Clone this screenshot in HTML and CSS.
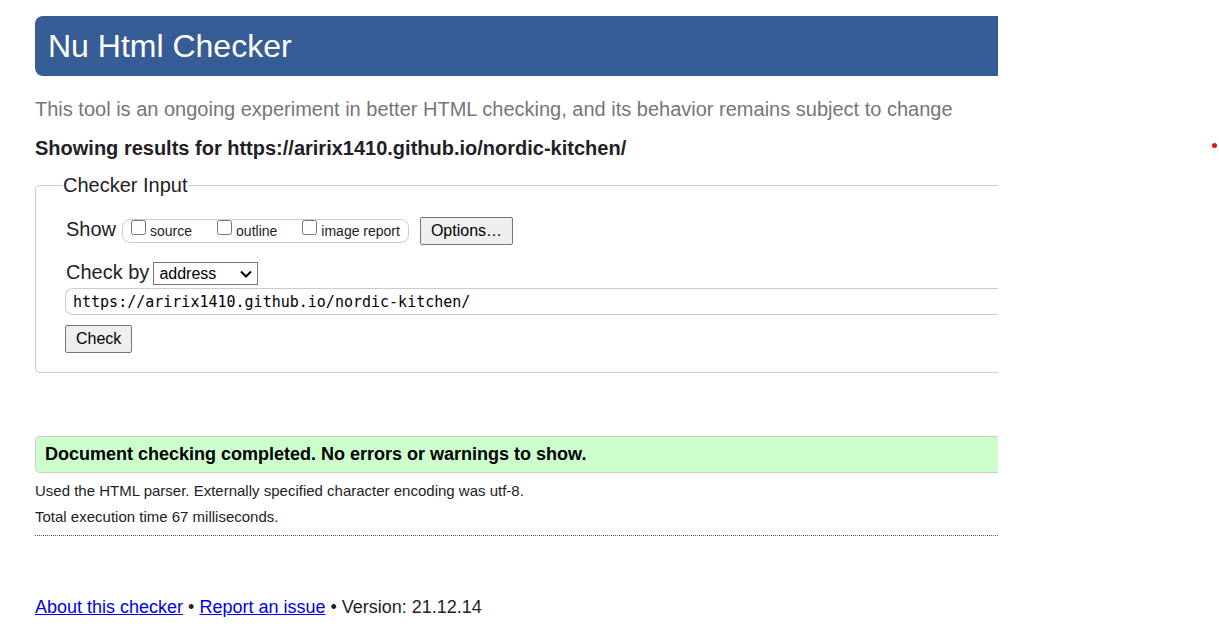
FILE: index.html
```
<!DOCTYPE html>
<html lang="en">
<head>
<meta charset="utf-8">
<title>Nu Html Checker</title>
<link rel="stylesheet" href="styles.css">
</head>
<body>
<div class="page">
  <header>
    <h1 class="banner">Nu Html Checker</h1>
    <p class="tagline">This tool is an ongoing experiment in better HTML checking, and its behavior remains subject to change</p>
  </header>
  <main>
    <h2 class="heading">Showing results for https://aririx1410.github.io/nordic-kitchen/</h2>
    <form>
      <fieldset class="checker">
        <legend class="legend">Checker Input</legend>
        <div class="row show-row">
          <span>Show</span>
          <span class="options">
            <label class="option"><input class="tick" type="checkbox">source</label>
            <label class="option"><input class="tick" type="checkbox">outline</label>
            <label class="option"><input class="tick" type="checkbox">image report</label>
          </span>
          <button class="button" type="button">Options…</button>
        </div>
        <div class="row by-row">
          <label for="by">Check by</label>
          <span class="select-wrap">
            <select class="select" id="by"><option>address</option><option>file upload</option><option>text input</option></select>
            <svg class="chevron" width="12" height="8" viewBox="0 0 12 8" aria-hidden="true"><path d="M1 1.5 6 6.5 11 1.5" fill="none" stroke="#000" stroke-width="2"/></svg>
          </span>
        </div>
        <input class="address" type="text" aria-label="Address" value="https://aririx1410.github.io/nordic-kitchen/">
        <button class="button" type="button">Check</button>
      </fieldset>
    </form>
    <p class="success">Document checking completed. No errors or warnings to show.</p>
    <div class="details">
      <p>Used the HTML parser. Externally specified character encoding was utf-8.</p>
      <p>Total execution time 67 milliseconds.</p>
    </div>
  </main>
  <footer class="footer"><a href="#about">About this checker</a> • <a href="#issue">Report an issue</a> • Version: 21.12.14</footer>
</div>
<span class="dot"></span>
</body>
</html>
```
FILE: styles.css
```
* {
  box-sizing: border-box;
}

body {
  margin: 0;
  background: #fff;
  color: #1f2126;
  font-family: "Liberation Sans", Arial, sans-serif;
  font-size: 20px;
  line-height: 24px;
}

h1, h2, p {
  margin: 0;
}

.page {
  padding: 16px 221px 12px 35px;
}

.banner {
  padding: 12px 13px;
  border-radius: 8px 0 0 8px;
  background: #365d95;
  color: #fff;
  font-size: 32px;
  font-weight: 400;
  line-height: 36px;
}

.tagline {
  margin-top: 21px;
  color: #767676;
}

.heading {
  margin-top: 15px;
  font-size: 20px;
}

.checker {
  min-width: 0;
  margin: 13px 0 0;
  padding: 20px 0 19px 29px;
  border: 1px solid #ccc;
  border-right: 0;
  border-radius: 5px 0 0 5px;
}

.legend {
  margin-left: -2px;
  padding: 0;
}

.row {
  display: flex;
  align-items: center;
  padding-left: 1px;
  line-height: 20px;
}

.row > :first-child {
  padding-bottom: 4px;
}

.show-row {
  gap: 6px;
}

.options {
  display: flex;
  gap: 25px;
  height: 24px;
  margin-right: 5px;
  padding: 0 8px;
  border: 1px solid #ccc;
  border-radius: 8px;
  font-size: 14px;
  line-height: 22px;
}

.option {
  display: flex;
  gap: 4px;
}

.tick {
  width: 15px;
  height: 15px;
  margin: 0;
}

.button {
  display: block;
  height: 28px;
  padding: 0 10px;
  border: 1px solid #767676;
  border-radius: 2px;
  background: #efefef;
  color: #000;
  font-family: inherit;
  font-size: 16px;
}

.by-row {
  gap: 4px;
  margin-top: 17px;
}

.select-wrap {
  display: grid;
  align-items: center;
}

.select {
  grid-area: 1 / 1;
  width: 105px;
  height: 23px;
  margin-bottom: 1px;
  padding: 0 5px;
  appearance: none;
  border: 1px solid #767676;
  border-radius: 0;
  background: #fff;
  color: #000;
  font-family: inherit;
  font-size: 16px;
}

.chevron {
  grid-area: 1 / 1;
  justify-self: end;
  margin-right: 6px;
  pointer-events: none;
}

.address {
  display: block;
  width: 100%;
  height: 27px;
  margin: 2px 0 10px;
  padding: 1px 7px 0;
  border: 1px solid #ccc;
  border-right: 0;
  border-radius: 8px 0 0 8px;
  color: #000;
  font-family: "DejaVu Sans Mono", monospace;
  font-size: 15px;
}

.success {
  margin-top: 63px;
  padding: 5px 9px 6px;
  border: 1px solid #ccc;
  border-right: 0;
  border-radius: 5px 0 0 5px;
  background: #cfc;
  color: #000;
  font-size: 18px;
  font-weight: 700;
}

.details {
  padding: 5px 0;
  border-bottom: 1px dotted #555;
  font-size: 15px;
  line-height: 26px;
}

.footer {
  margin-top: 59px;
  font-size: 18px;
}

.footer a {
  color: #00e;
}

/* Recording marker that floats over the page */
.dot {
  position: absolute;
  top: 143px;
  right: 2px;
  width: 5px;
  height: 5px;
  border-radius: 50%;
  background: #e81010;
}
```
